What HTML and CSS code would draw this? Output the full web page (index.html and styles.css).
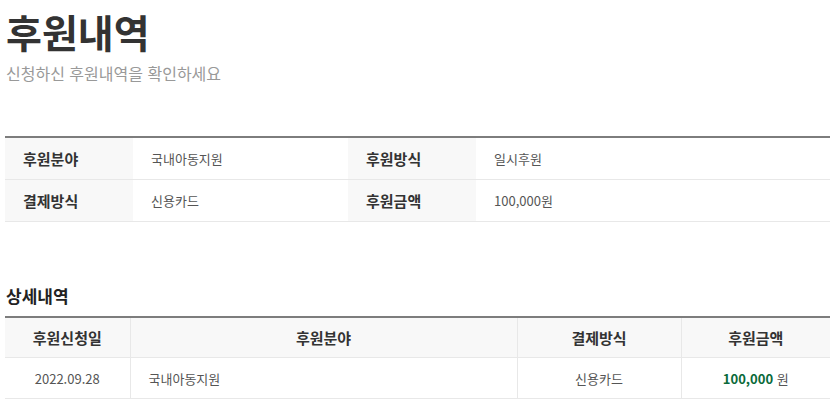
FILE: index.html
```html
<!DOCTYPE html>
<html lang="ko">
<head>
    <meta charset="UTF-8">
    <meta name="viewport" content="width=device-width, initial-scale=1.0">
    <title>후원내역</title>
    <link rel="stylesheet" href="styles.css">
</head>
<body>
    <div class="container">
        <div class="page-head">
            <h1>후원내역</h1>
            <p class="desc">신청하신 후원내역을 확인하세요</p>
        </div>

        <table class="info-table">
            <colgroup>
                <col class="c-label">
                <col class="c-value">
                <col class="c-label">
                <col>
            </colgroup>
            <tr>
                <th>후원분야</th>
                <td>국내아동지원</td>
                <th>후원방식</th>
                <td>일시후원</td>
            </tr>
            <tr>
                <th>결제방식</th>
                <td>신용카드</td>
                <th>후원금액</th>
                <td>100,000원</td>
            </tr>
        </table>

        <h2>상세내역</h2>
        <table class="detail-table">
            <colgroup>
                <col class="c-date">
                <col>
                <col class="c-pay">
                <col class="c-amount">
            </colgroup>
            <thead>
                <tr>
                    <th>후원신청일</th>
                    <th>후원분야</th>
                    <th>결제방식</th>
                    <th>후원금액</th>
                </tr>
            </thead>
            <tbody>
                <tr>
                    <td>2022.09.28</td>
                    <td class="left">국내아동지원</td>
                    <td>신용카드</td>
                    <td><strong class="amount">100,000</strong> 원</td>
                </tr>
            </tbody>
        </table>
    </div>
</body>
</html>
```

FILE: styles.css
```css
body {
    font-family: "Noto Sans CJK KR", "Noto Sans", sans-serif;
    margin: 0;
    background: #fff;
    color: #333;
}
.container {
    padding: 0 5px;
}
.page-head {
    padding-top: 6px;
}
h1 {
    margin: 0;
    font-size: 39px;
    line-height: 50px;
    font-weight: 700;
    color: #333;
    padding-left: 1px;
}
.desc {
    margin: 8px 0 0;
    font-size: 16px;
    line-height: 18px;
    color: #999;
    padding-left: 1px;
}
table {
    width: 100%;
    border-collapse: collapse;
    table-layout: fixed;
}
.info-table {
    margin-top: 54px;
    border-top: 2px solid #7d7d7d;
}
.info-table col.c-label {
    width: 128px;
}
.info-table col.c-value {
    width: 215px;
}
.info-table th,
.info-table td {
    height: 41px;
    padding: 0 0 0 18px;
    border-bottom: 1px solid #e8e8e8;
    text-align: left;
    vertical-align: middle;
}
.info-table th {
    background: #f8f8f8;
    font-size: 15px;
    font-weight: 700;
    color: #333;
}
.info-table td {
    font-size: 13px;
    color: #555;
}
h2 {
    margin: 62px 0 0;
    font-size: 17px;
    line-height: 24px;
    font-weight: 700;
    color: #222;
    padding-left: 1px;
}
.detail-table {
    margin-top: 8px;
    border-top: 2px solid #7d7d7d;
}
.detail-table col.c-date {
    width: 125px;
}
.detail-table col.c-pay {
    width: 164px;
}
.detail-table col.c-amount {
    width: 149px;
}
.detail-table th,
.detail-table td {
    text-align: center;
    vertical-align: middle;
    border-bottom: 1px solid #e8e8e8;
    border-left: 1px solid #e8e8e8;
    padding: 0;
}
.detail-table th:first-child,
.detail-table td:first-child {
    border-left: none;
}
.detail-table th {
    height: 39px;
    background: #f8f8f8;
    font-size: 15px;
    font-weight: 700;
    color: #333;
}
.detail-table td {
    height: 40px;
    font-size: 13px;
    color: #555;
}
.detail-table td.left {
    text-align: left;
    padding-left: 18px;
}
.amount {
    color: #0a6a3a;
    font-weight: 700;
}
```
